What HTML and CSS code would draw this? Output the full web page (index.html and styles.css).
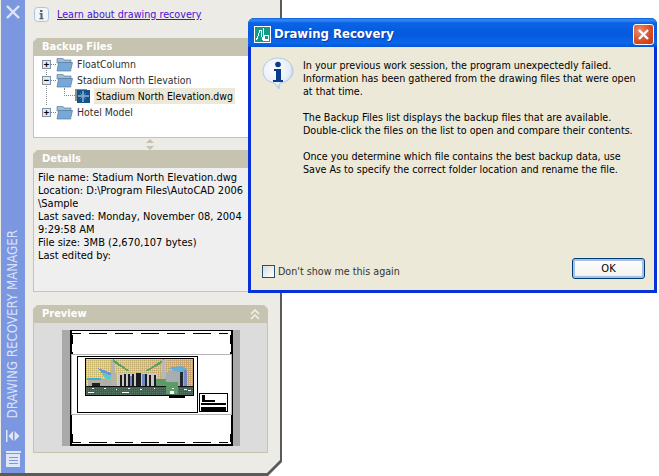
FILE: index.html
```html
<!DOCTYPE html>
<html lang="en">
<head>
<meta charset="utf-8">
<title>Drawing Recovery</title>
<link rel="stylesheet" href="styles.css">
</head>
<body>
<div class="panel">
  <div class="panel-inner">
    <aside class="strip">
      <svg class="strip-close" width="16" height="16" viewBox="0 0 16 16"><path d="M2 2L14 14M14 2L2 14" stroke="#dfe6f8" stroke-width="2.400"/></svg>
      <div class="strip-title">DRAWING RECOVERY MANAGER</div>
      <svg class="strip-arrows" width="16" height="12" viewBox="0 0 16 12"><path d="M1 0h1.500v12H1zM8 1v10L3.500 6zM9.500 1v10L14.500 6z" fill="#dfe6f8"/></svg>
      <svg class="strip-list" width="16" height="16" viewBox="0 0 16 16"><path d="M1 0h15v2H1zM1 3h14v13H1z" fill="#dfe6f8"/><path d="M4 6h9v1H4zM4 9h9v1H4zM4 12h9v1H4z" fill="#7b97e0"/></svg>
    </aside>
    <main class="content">
      <div class="learn">
        <svg width="15" height="15" viewBox="0 0 15 15"><rect x=".5" y=".5" width="14" height="14" rx="3" fill="#f2f5f8" stroke="#a9c6de"/><path d="M6 3h2.500v2H6zM5.500 6H8.500v5h1v1.200H5.500V11h1V7.200h-1z" fill="#55606c"/></svg>
        <a class="learn-link" href="#">Learn about drawing recovery</a>
      </div>

      <section class="section">
        <h2 class="section-head">Backup Files</h2>
        <div class="tree">
          <div class="tree-row">
            <span class="expander">+</span><span class="dots"></span>
            <svg class="folder" width="17" height="15" viewBox="0 0 17 15"><path d="M1 4V1.500h6L8 3h7v3H1z" fill="#9dbbd9" stroke="#5d7e9f" stroke-width=".7"/><path d="M1 14L2.500 5.500h14L14.500 14z" fill="#78a8d6" stroke="#55809f" stroke-width=".7"/></svg>
            <span class="tree-label">FloatColumn</span>
          </div>
          <div class="tree-row">
            <span class="expander">&minus;</span><span class="dots"></span>
            <svg class="folder" width="17" height="15" viewBox="0 0 17 15"><path d="M1 4V1.500h6L8 3h7v3H1z" fill="#9dbbd9" stroke="#5d7e9f" stroke-width=".7"/><path d="M1 14L2.500 5.500h14L14.500 14z" fill="#78a8d6" stroke="#55809f" stroke-width=".7"/></svg>
            <span class="tree-label">Stadium North Elevation</span>
          </div>
          <div class="tree-row tree-row-file">
            <span class="dots dots-file"></span>
            <svg class="dwg" width="16" height="14" viewBox="0 0 16 14"><rect x="0" y="0" width="12" height="12" fill="#8c8c8c"/><rect x="2" y="1" width="13" height="13" fill="#14528e"/><path d="M8 2v11M3 7h11" stroke="#cfe6f6"/><path d="M5 4l6 6M11 4l-6 6" stroke="#5fa7d8" stroke-width=".7"/></svg>
            <span class="tree-selected">Stadium North Elevation.dwg</span>
          </div>
          <div class="tree-row">
            <span class="expander">+</span><span class="dots"></span>
            <svg class="folder" width="17" height="15" viewBox="0 0 17 15"><path d="M1 4V1.500h6L8 3h7v3H1z" fill="#9dbbd9" stroke="#5d7e9f" stroke-width=".7"/><path d="M1 14L2.500 5.500h14L14.500 14z" fill="#78a8d6" stroke="#55809f" stroke-width=".7"/></svg>
            <span class="tree-label">Hotel Model</span>
          </div>
          <span class="tree-spine"></span>
        </div>
      </section>

      <div class="splitter">
        <svg width="8" height="11" viewBox="0 0 8 11"><path d="M4 0l4 4H0zM4 11l4-4H0z" fill="#c6c3b1"/></svg>
      </div>

      <section class="section">
        <h2 class="section-head">Details</h2>
        <div class="details">
          <div>File name: Stadium North Elevation.dwg</div>
          <div>Location: D:\Program Files\AutoCAD 2006</div>
          <div>\Sample</div>
          <div>Last saved: Monday, November 08, 2004</div>
          <div>9:29:58 AM</div>
          <div>File size: 3MB (2,670,107 bytes)</div>
          <div>Last edited by:</div>
        </div>
      </section>

      <section class="section section-preview">
        <h2 class="section-head section-head-preview">Preview
          <svg width="10" height="11" viewBox="0 0 10 11"><path d="M1 5l4-4 4 4M1 10l4-4 4 4" fill="none" stroke="#f2f1ea" stroke-width="1.500"/></svg>
        </h2>
        <div class="preview">
          <svg width="178" height="116" viewBox="0 0 178 116" shape-rendering="crispEdges">
            <defs>
              <linearGradient id="sky" x1="0" x2="1" y1="0" y2="0">
                <stop offset="0" stop-color="#eecf58"/><stop offset=".45" stop-color="#e6c06a"/><stop offset="1" stop-color="#f09a60"/>
              </linearGradient>
              <pattern id="dither" width="2" height="2" patternUnits="userSpaceOnUse"><rect width="1" height="1" fill="#a8a070" opacity=".6"/><rect x="1" y="1" width="1" height="1" fill="#fbe8a0" opacity=".55"/></pattern>
              <pattern id="ground" width="2" height="2" patternUnits="userSpaceOnUse"><rect width="2" height="2" fill="#2f6a50"/><rect width="1" height="1" fill="#5a7868"/></pattern>
            </defs>
            <rect width="178" height="116" fill="#a9a9a9"/>
            <rect x="8" y="0" width="163" height="116" fill="#fff"/>
            <rect x="8" y="0" width="163" height="1" fill="#000"/>
            <rect x="8" y="114" width="163" height="2" fill="#000"/>
            <rect x="8" y="0" width="2" height="116" fill="#000"/>
            <rect x="169" y="0" width="2" height="116" fill="#000"/>
            <path d="M10 3.500h9m8 0h18m8 0h18m8 0h18m8 0h18m8 0h18m8 0h9M10 112.500h9m8 0h18m8 0h18m8 0h18m8 0h18m8 0h18m8 0h9" stroke="#000" fill="none"/>
            <path d="M9 5h2v9H9zM9 22h2v3H9zM9 104h2v8H9zM168 5h2v9h-2zM168 22h2v3h-2zM168 104h2v8h-2z" fill="#000"/>
            <rect x="9.500" y="24.500" width="160" height="60" fill="#fff" stroke="#b4b4b4"/>
            <rect x="15.500" y="26.500" width="120" height="56" fill="#fff" stroke="#000"/>
            <rect x="23.500" y="28.500" width="108" height="37" fill="url(#sky)" stroke="#000"/>
            <rect x="24" y="29" width="107" height="28" fill="url(#dither)"/>
            <rect x="24" y="57" width="107" height="8" fill="url(#ground)"/>
            <path d="M24 56h107v1H24z" fill="#111"/>
            <path d="M36 38l16 6 2 6-12-4z" fill="#6a90e0"/>
            <path d="M40 42l10 4-1 6-8-6z" fill="#5ec8c8"/>
            <path d="M26 49h23v7H26z" fill="#b0b0a8"/>
            <path d="M25 48h14v2H25z" fill="#40b0b8"/>
            <path d="M30 53h8v3h-8z" fill="#222"/>
            <path d="M49 30h3l3 26h-6z" fill="#b4b4a8"/>
            <path d="M51 29l17 12h-3L51 32zM102 29l-19 12h3l16-9z" fill="#5ea06a"/>
            <path d="M56 43h40v13H56z" fill="#c8c8c8"/>
            <path d="M58 45h2v11h-2zM62 44h2v12h-2zM66 44h2v12h-2zM70 44h2v12h-2zM74 43h5v13h-5zM83 44h2v12h-2zM87 45h2v11h-2zM92 45h2v11h-2z" fill="#1c1c1c"/>
            <path d="M68 46h2v10h-2zM80 44h3v12h-3z" fill="#7088c0"/>
            <path d="M100 30h3l1 26h-5z" fill="#b8b8b0"/>
            <path d="M94 49h10v7H94z" fill="#5d9a68"/>
            <path d="M104 42l12-4 6 2v16h-18z" fill="#a8aeb0"/>
            <path d="M106 38l12-2 6 2v6l-8-2z" fill="#60b0d8"/>
            <path d="M122 40h3v16h-3z" fill="#7888c0"/>
            <path d="M118 42h3v14h-3z" fill="#202830"/>
            <path d="M104 52h12v12h-12z" fill="#5d9a68"/>
            <path d="M30 58h2v1h-2zM42 58h2v1h-2zM54 59h1v1h-1zM66 58h2v1h-2zM78 59h2v1h-2zM92 58h1v1h-1zM110 58h2v1h-2zM122 59h3v1h-3z" fill="#fff"/>
            <path d="M26 62h6v1h-6zM60 62h7v1h-7zM108 61h4v3h-4zM126 60h3v1h-3z" fill="#fff"/>
            <rect x="107" y="66" width="16" height="2" fill="#000"/>
            <rect x="137.500" y="63.500" width="28" height="18" fill="#fff" stroke="#000"/>
            <path d="M140 65h3v5h10v2h-13zM139 73h25v2h-25zM139 77h25v4h-25z" fill="#000"/>
          </svg>
        </div>
      </section>
    </main>
  </div>
</div>

<div class="dialog">
  <header class="titlebar">
    <svg class="app-icon" width="17" height="17" viewBox="0 0 17 17" shape-rendering="crispEdges"><rect width="17" height="17" fill="#fff"/><rect x="1" y="1" width="15" height="15" fill="#129a88"/><path d="M2.500 14L6 4h1l1.500 10M9.500 2v12h5" fill="none" stroke="#fff"/><rect x="10.500" y="9.500" width="4" height="4" fill="#129a88" stroke="#fff"/></svg>
    <span class="title">Drawing Recovery</span>
    <button class="close" type="button" aria-label="Close"><svg width="11" height="11" viewBox="0 0 11 11"><path d="M1 1l9 9M10 1l-9 9" stroke="#fff" stroke-width="2.400"/></svg></button>
  </header>
  <div class="dialog-body">
    <div class="message">
      <svg class="info-icon" width="32" height="33" viewBox="0 0 32 33"><defs><radialGradient id="bub" cx=".4" cy=".35" r=".75"><stop offset="0" stop-color="#fff"/><stop offset=".65" stop-color="#e6eef7"/><stop offset="1" stop-color="#9ab8d8"/></radialGradient></defs><path d="M16 1C7 1 1 7 1 14c0 7 5 11 11 12l5 6 1-6c8-1 13-6 13-12C31 7 25 1 16 1z" fill="url(#bub)" stroke="#b4c8de"/><circle cx="16" cy="7.500" r="2.800" fill="#0b3b8c"/><path d="M12 12h7v11h2v2H11v-2h3v-9h-2z" fill="#0b3b8c"/></svg>
      <div class="message-text">
        <p>In your previous work session, the program unexpectedly failed.<br>Information has been gathered from the drawing files that were open<br>at that time.</p>
        <p>The Backup Files list displays the backup files that are available.<br>Double-click the files on the list to open and compare their contents.</p>
        <p>Once you determine which file contains the best backup data, use<br>Save As to specify the correct folder location and rename the file.</p>
      </div>
    </div>
    <div class="dialog-foot">
      <label class="check"><span class="checkbox"></span>Don't show me this again</label>
      <button class="ok" type="button">OK</button>
    </div>
  </div>
</div>
</body>
</html>
```

FILE: styles.css
```css
* { box-sizing: border-box; }
html, body { margin: 0; height: 100%; background: #fff; overflow: hidden; }
body { position: relative; font: 11px/13px "DejaVu Sans Condensed", "DejaVu Sans", sans-serif; color: #000; }

.panel {
  width: 282px; height: 476px; padding: 0 2px 3px 0;
  background: #5a5a5a;
  clip-path: polygon(0 0, 100% 0, 100% calc(100% - 14px), calc(100% - 14px) 100%, 0 100%);
}
.panel-inner {
  display: flex; height: 100%; padding-left: 1px;
  background: #ecebe6;
  clip-path: polygon(0 0, 100% 0, 100% calc(100% - 13px), calc(100% - 13px) 100%, 0 100%);
}

.strip {
  width: 24px; flex: none; display: flex; flex-direction: column; align-items: center;
  background: #7b97e0; color: #d8e2f8;
}
.strip-close { margin-top: 4px; }
.strip-title {
  margin-top: auto; writing-mode: vertical-rl; transform: rotate(180deg);
  font: 13.200px/14px "DejaVu Sans Condensed", sans-serif;
}
.strip-arrows { margin-top: 12px; }
.strip-list { margin-top: 9px; margin-bottom: 6px; }

.content { flex: 1; min-width: 0; padding: 0 12px 0 8px; display: flex; flex-direction: column; }

.learn { height: 38px; display: flex; align-items: center; gap: 8px; padding: 0 0 9px 1px; font-size: 10.700px; }
.learn-link { color: #4a10d0; text-decoration: underline; }

.section-head {
  margin: 0; height: 18px; padding-left: 9px; background: #c6c3b1; color: #fff;
  font: bold 11px/18px "DejaVu Sans Condensed", sans-serif;
  clip-path: polygon(4px 0, calc(100% - 4px) 0, 100% 4px, 100% 100%, 0 100%, 0 4px);
}
.section-head-preview { display: flex; justify-content: space-between; align-items: center; padding-right: 8px; }

.tree {
  position: relative; height: 82px; padding: 0 0 0 8px; font-size: 10.400px;
  background: #fff; border: solid #c6c3b1; border-width: 0 1px 1px;
}
.tree-row { display: flex; align-items: center; height: 16px; }
.expander {
  width: 9px; height: 9px; flex: none; border: 1px solid #7f93a8; background: #e8e8e4;
  font: bold 9px/7px "DejaVu Sans Mono", monospace; text-align: center; color: #000; position: relative; z-index: 1;
}
.dots { width: 5px; flex: none; border-top: 1px dotted #888; }
.folder { flex: none; }
.tree-label { margin-left: 4px; color: #303030; }
.tree-row-file { padding-left: 22px; }
.dots-file { width: 11px; height: 8px; border-top: 0; border-bottom: 1px dotted #888; border-left: 1px dotted #888; margin-top: -8px; }
.dwg { flex: none; }
.tree-selected { margin-left: 3px; padding: 1px 2px; height: 16px; line-height: 14px; background: #ece9d8; white-space: nowrap; }
.tree-spine { position: absolute; left: 12px; top: 11px; height: 38px; border-left: 1px dotted #888; }

.splitter { height: 12px; display: flex; align-items: center; justify-content: center; padding-right: 2px; }

.details {
  height: 124px; padding: 3px 0 0 4px; background: #efefef;
  border: solid #c6c3b1; border-width: 0 1px 1px; white-space: nowrap;
}

.section-preview { margin-top: 13px; }
.preview {
  height: 130px; padding-top: 7px; display: flex; justify-content: center; align-items: flex-start;
  background: #dcdcdc; border: solid #c6c3b1; border-width: 0 1px 1px;
}
.preview svg { display: block; }

.dialog {
  position: absolute; left: 248px; top: 18px; width: 409px; height: 275px;
  display: flex; flex-direction: column;
  background: #0831d9; border-radius: 6px 6px 0 0; padding: 0 3px 3px;
}
.titlebar {
  height: 29px; flex: none; margin: 0 -3px; padding: 3px 3px 0 6px;
  display: flex; align-items: center; gap: 3px; border-radius: 6px 6px 0 0;
  background: linear-gradient(#0a5ee0 0, #3a8cf8 2px, #0a63e6 5px, #0559dc 16px, #0a66ea 25px, #0354d8 29px);
}
.app-icon { flex: none; }
.title { flex: 1; color: #fff; font: bold 13px/16px "DejaVu Sans Condensed", sans-serif; text-shadow: 1px 1px 0 #0a3a9a; white-space: nowrap; }
.close {
  width: 21px; height: 21px; padding: 0; display: flex; align-items: center; justify-content: center;
  border: 1px solid #fff; border-radius: 3px;
  background: radial-gradient(circle at 30% 30%, #ee8a6c, #d84a24 60%, #c03a18);
}
.dialog-body { flex: 1; min-height: 0; display: flex; flex-direction: column; background: #ece9d8; padding: 10px 9px 11px 11px; font-size: 10.650px; }
.message { flex: 1; display: flex; gap: 9px; }
.info-icon { flex: none; }
.message-text { padding-top: 2px; }
.message-text p { margin: 0 0 13px; white-space: nowrap; }
.dialog-foot { display: flex; justify-content: space-between; align-items: flex-end; }
.check { display: flex; align-items: center; gap: 3px; color: #333; margin-bottom: 1px; }
.checkbox { width: 13px; height: 13px; border: 1px solid #1c5180; background: linear-gradient(135deg, #dcdcd7, #fff); }
.ok {
  width: 73px; height: 21px; padding: 0; font: 11px/13px "DejaVu Sans Condensed", sans-serif; color: #000;
  border: 1px solid #003c74; border-radius: 3px; background: linear-gradient(#fff, #f4f3ee 85%, #dcd8ce);
  box-shadow: inset 0 0 0 2px #a8c0e8;
}
```
